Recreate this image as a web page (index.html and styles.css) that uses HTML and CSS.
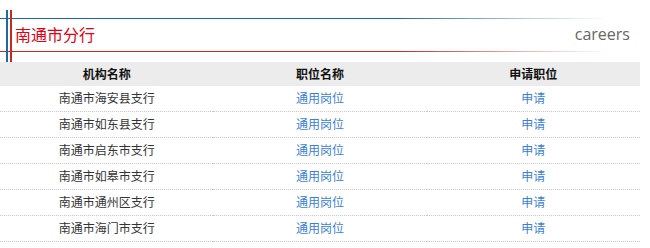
FILE: index.html
```html
<!DOCTYPE html>
<html lang="zh-CN">
<head>
<meta charset="utf-8">
<title>南通市分行</title>
<link rel="stylesheet" href="styles.css">
</head>
<body>
<div class="page">
  <div class="head">
    <span class="vline vline-blue"></span>
    <span class="vline vline-red"></span>
    <div class="title-bar">
      <h1 class="title">南通市分行</h1>
      <span class="careers">careers</span>
    </div>
  </div>
  <table class="jobs">
    <thead>
      <tr><th>机构名称</th><th>职位名称</th><th>申请职位</th></tr>
    </thead>
    <tbody>
      <tr><td>南通市海安县支行</td><td><a href="#">通用岗位</a></td><td><a href="#">申请</a></td></tr>
      <tr><td>南通市如东县支行</td><td><a href="#">通用岗位</a></td><td><a href="#">申请</a></td></tr>
      <tr><td>南通市启东市支行</td><td><a href="#">通用岗位</a></td><td><a href="#">申请</a></td></tr>
      <tr><td>南通市如皋市支行</td><td><a href="#">通用岗位</a></td><td><a href="#">申请</a></td></tr>
      <tr><td>南通市通州区支行</td><td><a href="#">通用岗位</a></td><td><a href="#">申请</a></td></tr>
      <tr><td>南通市海门市支行</td><td><a href="#">通用岗位</a></td><td><a href="#">申请</a></td></tr>
    </tbody>
  </table>
</div>
</body>
</html>
```

FILE: styles.css
```css
html, body {
  margin: 0;
  padding: 0;
  background: #ffffff;
}
body {
  font-family: "Noto Sans CJK SC", "Open Sans", sans-serif;
  font-size: 12px;
  color: #333333;
}
.page {
  width: 640px;
}
.head {
  position: relative;
  height: 62px;
  padding-top: 18px;
  box-sizing: border-box;
}
.vline {
  position: absolute;
  top: 10px;
  bottom: 0;
  width: 2px;
}
.vline-blue {
  left: 6px;
  background: #1a6aa6;
}
.vline-red {
  left: 10px;
  background: #c8281e;
}
.title-bar {
  height: 34px;
  box-sizing: border-box;
  display: flex;
  align-items: center;
  justify-content: space-between;
  background-image:
    linear-gradient(to right, #1a6aa6 0%, #1a6aa6 62%, rgba(26,106,166,0.35) 82%, rgba(26,106,166,0) 95%),
    linear-gradient(to right, #c8281e 0%, #c8281e 62%, rgba(200,40,30,0.35) 82%, rgba(200,40,30,0) 95%);
  background-size: 100% 1px, 100% 1px;
  background-position: left top, left bottom;
  background-repeat: no-repeat;
  padding: 0 10px 2px 15px;
}
.title {
  margin: 0;
  font-size: 16px;
  font-weight: normal;
  color: #e60012;
  line-height: 1;
}
.careers {
  font-family: "Open Sans", "Noto Sans", sans-serif;
  font-size: 16px;
  color: #666666;
  line-height: 1;
}
.jobs {
  width: 640px;
  border-collapse: collapse;
  table-layout: fixed;
}
.jobs th {
  background: #ececec;
  height: 23px;
  padding: 0 0 1px;
  font-size: 12px;
  font-weight: bold;
  color: #111111;
  text-align: center;
  line-height: 16px;
}
.jobs td {
  height: 23px;
  padding: 0 0 2px;
  text-align: center;
  border-bottom: 1px dotted #c8c8c8;
  color: #333333;
  line-height: 16px;
}
.jobs a {
  color: #3a7fd9;
  text-decoration: none;
}
```
